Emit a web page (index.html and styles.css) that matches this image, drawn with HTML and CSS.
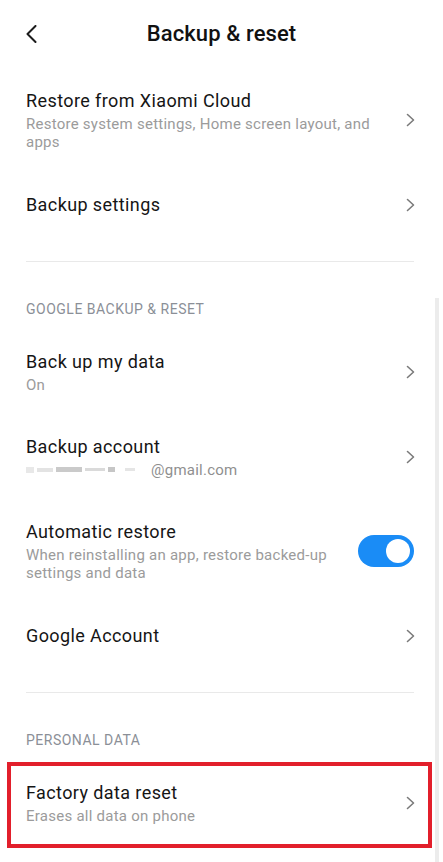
FILE: index.html
```html
<!DOCTYPE html>
<html lang="en">
<head>
<meta charset="utf-8">
<title>Backup &amp; reset</title>
<link rel="stylesheet" href="styles.css">
</head>
<body>
<div class="screen">
  <header class="topbar">
    <span class="back">
      <svg width="11" height="18" viewBox="0 0 11 18"><polyline points="9.5,1 1.5,9 9.5,17" fill="none" stroke="#1c1c1c" stroke-width="2" stroke-linecap="round" stroke-linejoin="round"/></svg>
    </span>
    <h1 class="title">Backup &amp; reset</h1>
  </header>

  <div class="row">
    <div class="text">
      <div class="r-title">Restore from Xiaomi Cloud</div>
      <div class="r-sub">Restore system settings, Home screen layout, and apps</div>
    </div>
    <svg class="chev" width="9" height="14" viewBox="0 0 9 14"><polyline points="1.5,1.5 7.5,7 1.5,12.5" fill="none" stroke="#7a7a7a" stroke-width="1.6" stroke-linecap="round" stroke-linejoin="round"/></svg>
  </div>

  <div class="row single">
    <div class="text">
      <div class="r-title">Backup settings</div>
    </div>
    <svg class="chev" width="9" height="14" viewBox="0 0 9 14"><polyline points="1.5,1.5 7.5,7 1.5,12.5" fill="none" stroke="#7a7a7a" stroke-width="1.6" stroke-linecap="round" stroke-linejoin="round"/></svg>
  </div>

  <div class="divider"></div>
  <div class="section">GOOGLE BACKUP &amp; RESET</div>

  <div class="row">
    <div class="text">
      <div class="r-title">Back up my data</div>
      <div class="r-sub">On</div>
    </div>
    <svg class="chev" width="9" height="14" viewBox="0 0 9 14"><polyline points="1.5,1.5 7.5,7 1.5,12.5" fill="none" stroke="#7a7a7a" stroke-width="1.6" stroke-linecap="round" stroke-linejoin="round"/></svg>
  </div>

  <div class="row">
    <div class="text">
      <div class="r-title">Backup account</div>
      <div class="r-sub email"><span class="blur"><i class="b1"></i><i class="b2"></i><i class="b3"></i><i class="b4"></i><i class="b5"></i><i class="b6"></i></span>@gmail.com</div>
    </div>
    <svg class="chev" width="9" height="14" viewBox="0 0 9 14"><polyline points="1.5,1.5 7.5,7 1.5,12.5" fill="none" stroke="#7a7a7a" stroke-width="1.6" stroke-linecap="round" stroke-linejoin="round"/></svg>
  </div>

  <div class="row">
    <div class="text">
      <div class="r-title">Automatic restore</div>
      <div class="r-sub">When reinstalling an app, restore backed-up settings and data</div>
    </div>
    <span class="toggle"><span class="knob"></span></span>
  </div>

  <div class="row single">
    <div class="text">
      <div class="r-title">Google Account</div>
    </div>
    <svg class="chev" width="9" height="14" viewBox="0 0 9 14"><polyline points="1.5,1.5 7.5,7 1.5,12.5" fill="none" stroke="#7a7a7a" stroke-width="1.6" stroke-linecap="round" stroke-linejoin="round"/></svg>
  </div>

  <div class="divider"></div>
  <div class="section">PERSONAL DATA</div>

  <div class="row highlighted">
    <div class="text">
      <div class="r-title">Factory data reset</div>
      <div class="r-sub">Erases all data on phone</div>
    </div>
    <svg class="chev" width="9" height="14" viewBox="0 0 9 14"><polyline points="1.5,1.5 7.5,7 1.5,12.5" fill="none" stroke="#7a7a7a" stroke-width="1.6" stroke-linecap="round" stroke-linejoin="round"/></svg>
    <span class="redbox"></span>
  </div>

  <span class="scrollbar"></span>
</div>
</body>
</html>
```

FILE: styles.css
```css
* { box-sizing: border-box; }

html, body {
  margin: 0;
  padding: 0;
  background: #ffffff;
}

body {
  font-family: Roboto, "Noto Sans", "Liberation Sans", sans-serif;
  color: #161616;
}

.screen {
  position: relative;
  width: 443px;
  height: 862px;
  overflow: hidden;
  background: #ffffff;
}

.topbar {
  position: relative;
  height: 68px;
  padding-top: 22px;
  display: flex;
  justify-content: center;
}

.back {
  position: absolute;
  left: 26px;
  top: 25px;
  display: block;
  line-height: 0;
}

.title {
  margin: 0;
  font-size: 22px;
  line-height: 24px;
  font-weight: 500;
  color: #111111;
  letter-spacing: 0.1px;
}

.row {
  position: relative;
  display: flex;
  align-items: center;
  padding: 20.5px 29px 20.5px 26px;
}

.row.single {
  min-height: 68px;
}

.text {
  flex: 1;
  min-width: 0;
  margin-right: 20px;
}

.r-title {
  font-size: 18px;
  line-height: 24px;
  color: #151515;
  letter-spacing: 0.4px;
}

.r-sub {
  margin-top: 2px;
  font-size: 15px;
  line-height: 18px;
  color: #9b9b9b;
  letter-spacing: 0.25px;
}

.chev {
  flex: none;
  display: block;
  margin-right: -1px;
}

.email {
  display: flex;
  align-items: center;
  color: #8f8f8f;
}

.blur {
  display: inline-flex;
  align-items: center;
  height: 10px;
  width: 124px;
  margin-right: 1px;
}

.blur i {
  display: block;
  height: 4px;
  background: #d9d9d9;
  margin-right: 3px;
}

.blur .b1 { width: 8px; background: #e8e8e8; height: 6px; }
.blur .b2 { width: 16px; background: #e3e3e3; }
.blur .b3 { width: 26px; background: #cacaca; height: 5px; }
.blur .b4 { width: 20px; background: #dadada; height: 3px; }
.blur .b5 { width: 7px; background: #c6c6c6; height: 5px; margin-right: 10px; }
.blur .b6 { width: 10px; background: #e5e5e5; height: 3px; }

.toggle {
  flex: none;
  position: relative;
  width: 56px;
  height: 32px;
  border-radius: 16px;
  background: #1a8cf6;
}

.knob {
  position: absolute;
  right: 4px;
  top: 4px;
  width: 24px;
  height: 24px;
  border-radius: 50%;
  background: #ffffff;
}

.divider {
  margin: 22px 29px 0 26px;
  height: 1px;
  background: #e9e9e9;
}

.section {
  padding: 38px 26px 11px;
  font-size: 14px;
  line-height: 18px;
  color: #8b8f97;
  letter-spacing: 0.5px;
}

.redbox {
  position: absolute;
  left: 7px;
  right: 11px;
  top: 2px;
  bottom: -3px;
  border: 4.5px solid #e21f2b;
  pointer-events: none;
}

.scrollbar {
  position: absolute;
  left: 435px;
  top: 298px;
  bottom: 0;
  width: 4px;
  background: #ececec;
}
```
